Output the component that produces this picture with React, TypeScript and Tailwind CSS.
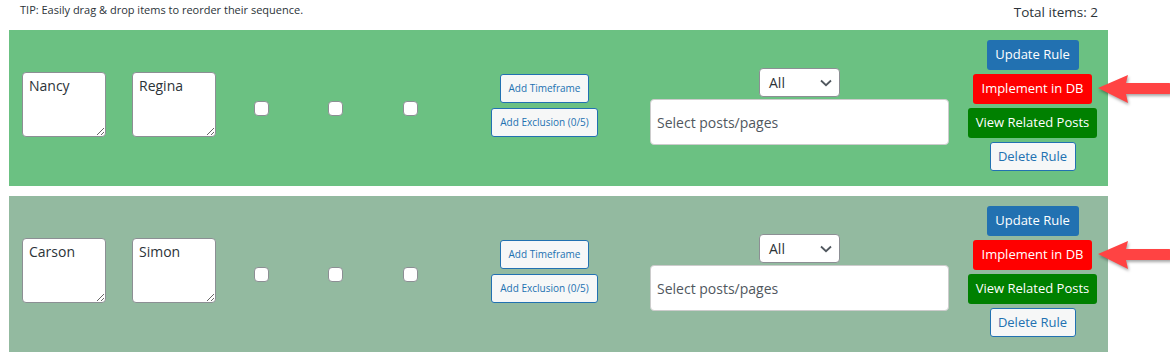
import React from "react";

const font = { fontFamily: '"Open Sans", "Noto Sans", Arial, sans-serif' };

function Arrow() {
  return (
    <svg
      className="absolute left-[1088px] top-[43px]"
      width="78"
      height="36"
      viewBox="0 0 78 36"
      style={{ filter: "drop-shadow(1px 2px 1.5px rgba(0,0,0,0.35))" }}
    >
      <path
        d="M1 15 L31 2 L29 10 L72 10 A5.5 5.5 0 0 1 72 21 L29 21 L31 30 Z"
        fill="#ff4343"
      />
    </svg>
  );
}

function Row({ a, b, bg }: { a: string; b: string; bg: string }) {
  return (
    <div className={`relative flex h-[156px] w-[1099px] items-center ${bg}`}>
      <textarea
        readOnly
        defaultValue={a}
        className="ml-[13px] mt-[-8px] h-[65px] w-[84px] rounded-[4px] border border-[#8c8f94] bg-white px-[6px] py-[3px] text-[14px] leading-[20px] text-[#2c3338] outline-none"
        style={font}
      />
      <textarea
        readOnly
        defaultValue={b}
        className="ml-[26px] mt-[-8px] h-[65px] w-[84px] rounded-[4px] border border-[#8c8f94] bg-white px-[6px] py-[3px] text-[14px] leading-[20px] text-[#2c3338] outline-none"
        style={font}
      />
      <span className="ml-[38px] h-[15px] w-[15px] rounded-[4px] border border-[#8c8f94] bg-white" />
      <span className="ml-[59px] h-[15px] w-[15px] rounded-[4px] border border-[#8c8f94] bg-white" />
      <span className="ml-[60px] h-[15px] w-[15px] rounded-[4px] border border-[#8c8f94] bg-white" />
      <div className="ml-[73px] mt-[-6px] flex w-[107px] flex-col items-center gap-[5px]" style={font}>
        <button className="h-[29px] w-[89px] rounded-[3px] border border-[#2271b1] bg-[#f6f7f7] text-[10px] text-[#2271b1]">
          Add Timeframe
        </button>
        <button className="h-[29px] w-[107px] rounded-[3px] border border-[#2271b1] bg-[#f6f7f7] text-[10px] text-[#2271b1]">
          Add Exclusion (0/5)
        </button>
      </div>
      <div className="ml-[52px] mt-[-3px] flex w-[299px] flex-col items-center gap-[2px]" style={font}>
        <div className="flex h-[29px] w-[81px] items-center justify-between rounded-[4px] border border-[#8c8f94] bg-white pl-[9px] pr-[7px] text-[14px] text-[#2c3338]">
          <span>All</span>
          <svg width="12" height="8" viewBox="0 0 12 8">
            <path d="M1 1.5 L6 6.2 L11 1.5" stroke="#50575e" strokeWidth="1.8" fill="none" />
          </svg>
        </div>
        <div className="flex h-[46px] w-[299px] items-center rounded-[4px] border border-[#cccccc] bg-white pl-[6px] text-[14px] text-[#50575e]">
          Select posts/pages
        </div>
      </div>
      <div className="ml-[19px] mt-[-5px] flex w-[129px] flex-col items-center gap-[4px] text-[13px]" style={font}>
        <button className="h-[30px] w-[92px] rounded-[3px] bg-[#2271b1] text-white">Update Rule</button>
        <button className="h-[30px] w-[119px] rounded-[3px] bg-[#ff0000] text-white">Implement in DB</button>
        <button className="h-[30px] w-[129px] rounded-[3px] bg-[#008000] text-white">View Related Posts</button>
        <button className="h-[29px] w-[86px] rounded-[3px] border border-[#2271b1] bg-[#f6f7f7] text-[#2271b1]">
          Delete Rule
        </button>
      </div>
      <Arrow />
    </div>
  );
}

export default function App() {
  return (
    <div className="h-[360px] w-[1170px] bg-white pl-[9px]" style={font}>
      <div className="flex h-[30px] w-[1099px] items-start justify-between pl-[11px] pr-[10px] pt-[2px]">
        <span className="text-[11px] text-[#2c3338]">
          <span className="font-medium">TIP:</span> Easily drag &amp; drop items to reorder their sequence.
        </span>
        <span className="text-[13.5px] text-[#2c3338]">Total items: 2</span>
      </div>
      <div className="flex flex-col gap-[10px]">
        <Row a="Nancy" b="Regina" bg="bg-[#6bc182]" />
        <Row a="Carson" b="Simon" bg="bg-[#93baa0]" />
      </div>
    </div>
  );
}
